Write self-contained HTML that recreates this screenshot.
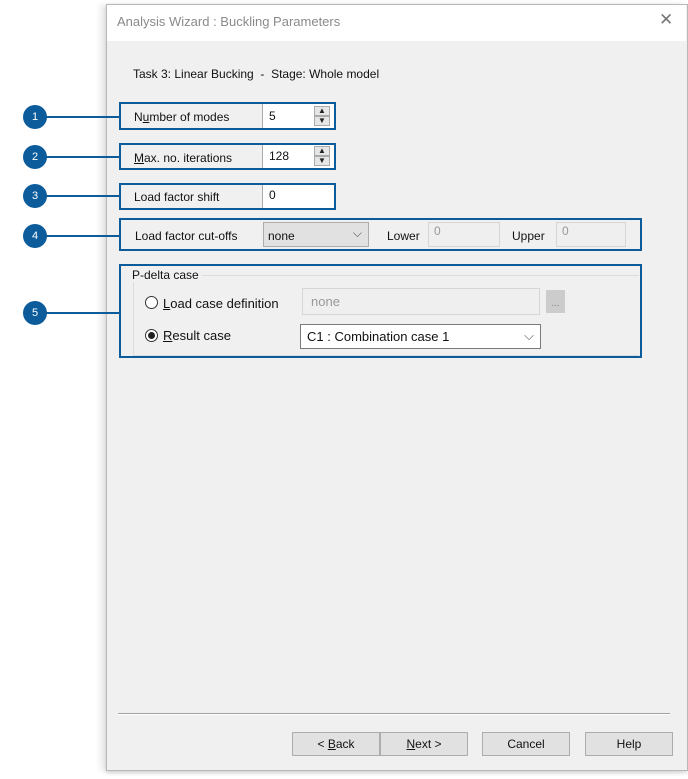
<!DOCTYPE html>
<html><head><style>
body{margin:0;width:688px;height:779px;background:#fff;position:relative;font-family:"Liberation Sans",sans-serif;font-size:12px;color:#111;overflow:hidden}
.a{position:absolute}
.dlg{left:106px;top:4px;width:580px;height:765px;background:#f0f0f0;border:1px solid #b8b8b8;box-shadow:-6px 0 6px rgba(0,0,0,.08),0 2px 4px rgba(0,0,0,.15)}
.title{left:107px;top:5px;width:579px;height:36px;background:#fff}
.c{width:24px;height:24px;border-radius:50%;background:#0c5c9c;color:#fff;text-align:center;line-height:24px;font-size:11px;left:23px}
.ln{height:2px;background:#0c5c9c;left:45px;width:74px}
.bx{border:2px solid #0c5c9c;box-sizing:border-box}
.inp{background:#fff;border:1px solid #adadad;box-sizing:border-box;padding:5px 6px}
.dis{background:#efefef;border:1px solid #d6d6d6;box-sizing:border-box;color:#999;padding:1px 5px}
.sp{width:16px;height:10px;border:1px solid #aaa;background:#e6e6e6;box-sizing:border-box;font-size:8px;text-align:center;line-height:8px;color:#222}
.btn{top:732px;height:24px;width:88px;background:#e1e1e1;border:1px solid #adadad;box-sizing:border-box;text-align:center;line-height:22px}
.rad{width:13px;height:13px;border:1px solid #333;border-radius:50%;background:#fff;box-sizing:border-box}
</style></head><body>
<div class="a dlg"></div>
<div class="a title"></div>
<div class="a" style="left:117px;top:14px;font-size:13px;color:#8a8a8a">Analysis Wizard : Buckling Parameters</div>
<div class="a" style="left:659px;top:10px;font-size:17px;color:#777;font-weight:100">✕</div>
<div class="a" style="left:133px;top:67px">Task 3: Linear Bucking &nbsp;- &nbsp;Stage: Whole model</div>

<div class="a ln" style="top:116px"></div><div class="a c" style="top:105px">1</div>
<div class="a ln" style="top:156px"></div><div class="a c" style="top:145px">2</div>
<div class="a ln" style="top:195px"></div><div class="a c" style="top:184px">3</div>
<div class="a ln" style="top:235px"></div><div class="a c" style="top:224px">4</div>
<div class="a ln" style="top:312px"></div><div class="a c" style="top:301px">5</div>

<div class="a bx" style="left:119px;top:102px;width:217px;height:28px"></div>
<div class="a" style="left:134px;top:110px">N<u>u</u>mber of modes</div>
<div class="a inp" style="left:262px;top:104px;width:50px;height:24px;border:none;border-left:1px solid #aaa">5</div>
<div class="a" style="left:312px;top:104px;width:22px;height:24px;background:#fff"></div>
<div class="a sp" style="left:314px;top:106px">▲</div><div class="a sp" style="left:314px;top:116px">▼</div>

<div class="a bx" style="left:119px;top:143px;width:217px;height:27px"></div>
<div class="a" style="left:134px;top:151px"><u>M</u>ax. no. iterations</div>
<div class="a inp" style="left:262px;top:145px;width:50px;height:23px;border:none;border-left:1px solid #aaa;padding-top:4px">128</div>
<div class="a" style="left:312px;top:145px;width:22px;height:23px;background:#fff"></div>
<div class="a sp" style="left:314px;top:146px">▲</div><div class="a sp" style="left:314px;top:156px">▼</div>

<div class="a bx" style="left:119px;top:183px;width:217px;height:27px"></div>
<div class="a" style="left:134px;top:190px">Load factor shift</div>
<div class="a inp" style="left:262px;top:185px;width:72px;height:23px;border:none;border-left:1px solid #aaa;padding-top:3px">0</div>

<div class="a bx" style="left:119px;top:218px;width:523px;height:33px"></div>
<div class="a" style="left:135px;top:229px">Load factor cut-offs</div>
<div class="a" style="left:263px;top:222px;width:106px;height:25px;background:#e1e1e1;border:1px solid #adadad;box-sizing:border-box;padding:6px 4px">none<span style="position:absolute;right:6px;top:3px;color:#555">⌵</span></div>
<div class="a" style="left:387px;top:229px">Lower</div>
<div class="a dis" style="left:428px;top:222px;width:72px;height:25px">0</div>
<div class="a" style="left:512px;top:229px">Upper</div>
<div class="a dis" style="left:556px;top:222px;width:70px;height:25px">0</div>

<div class="a bx" style="left:119px;top:264px;width:523px;height:94px"></div>
<div class="a" style="left:133px;top:275px;width:505px;height:79px;border:1px solid #dcdcdc;border-right:none"></div>
<div class="a" style="left:129px;top:268px;background:#f0f0f0;padding:0 3px">P-delta case</div>
<div class="a rad" style="left:145px;top:296px"></div>
<div class="a" style="left:163px;top:296px;font-size:13px"><u>L</u>oad case definition</div>
<div class="a dis" style="left:302px;top:288px;width:238px;height:27px;padding:5px 8px;font-size:13px">none</div>
<div class="a" style="left:546px;top:290px;width:19px;height:23px;background:#ccc;color:#888;text-align:center;font-size:10px;line-height:28px">...</div>
<div class="a rad" style="left:145px;top:329px"></div><div class="a" style="left:148px;top:332px;width:7px;height:7px;border-radius:50%;background:#222"></div>
<div class="a" style="left:163px;top:328px;font-size:13px"><u>R</u>esult case</div>
<div class="a inp" style="left:300px;top:324px;width:241px;height:25px;border-color:#7a7a7a;padding:4px 6px;font-size:13px">C1 : Combination case 1<span style="position:absolute;right:6px;top:3px;color:#555">⌵</span></div>

<div class="a" style="left:118px;top:713px;width:552px;height:1px;background:#a0a0a0"></div>
<div class="a" style="left:118px;top:714px;width:552px;height:1px;background:#fff"></div>
<div class="a btn" style="left:292px">&lt; <u>B</u>ack</div>
<div class="a btn" style="left:380px"><u>N</u>ext &gt;</div>
<div class="a btn" style="left:482px">Cancel</div>
<div class="a btn" style="left:585px">Help</div>
</body></html>
